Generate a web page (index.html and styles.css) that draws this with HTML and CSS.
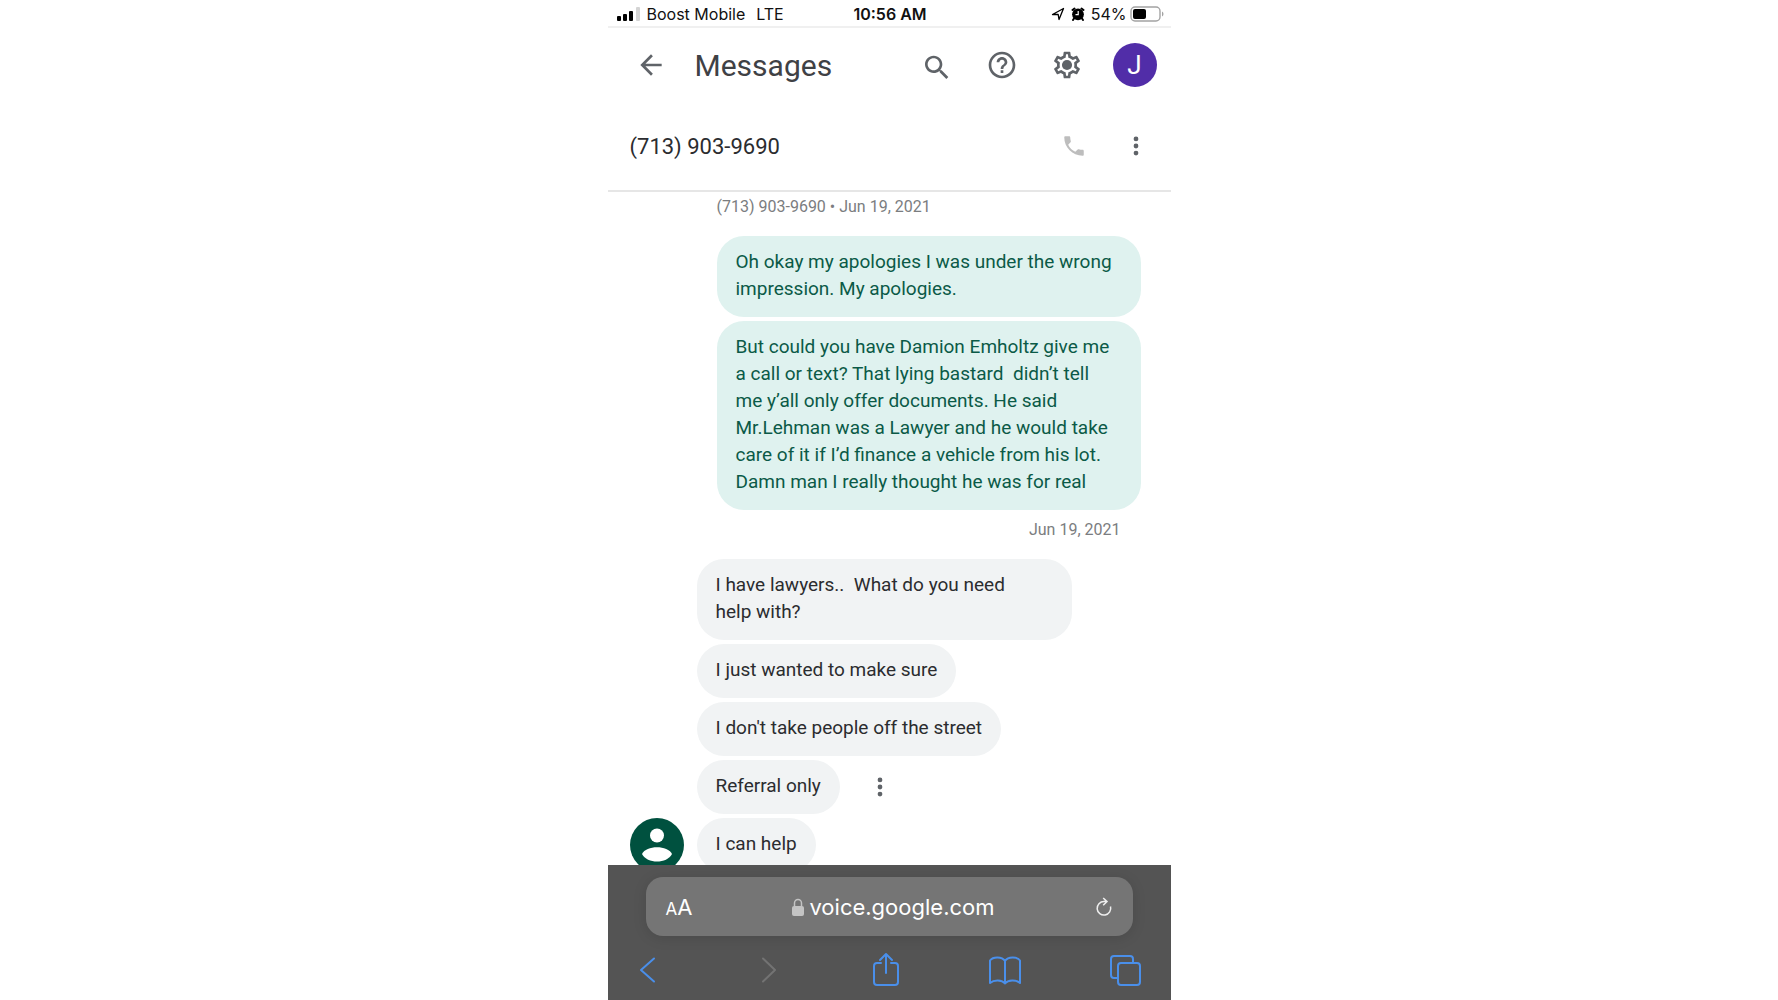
FILE: index.html
```html
<!DOCTYPE html>
<html lang="en">

<head>
    <meta charset="UTF-8">
    <meta name="viewport" content="width=device-width, initial-scale=1.0">
    <title>Messages</title>
    <link rel="stylesheet" href="styles.css">
</head>

<body>
    <div class="phone">
        <div class="status">
            <div class="status-left">
                <svg class="signal" viewBox="0 0 24 14" width="24" height="14" aria-hidden="true">
                    <rect x="0" y="9" width="4" height="5" rx="1"/>
                    <rect x="6" y="7" width="4" height="7" rx="1"/>
                    <rect x="12" y="4" width="4" height="10" rx="1"/>
                    <rect x="19" y="0" width="4" height="14" rx="1" fill="#d4d4d4"/>
                </svg>
                <span>Boost Mobile</span>
                <span class="network">LTE</span>
            </div>
            <div class="clock">10:56 AM</div>
            <div class="status-right">
                <svg viewBox="0 0 14 14" width="14" height="14" aria-hidden="true">
                    <path d="M1.500 7.500L12.500 1.500L8 12.500L7.200 7.500Z" fill="none" stroke="#000" stroke-width="1.300" stroke-linejoin="round"/>
                </svg>
                <svg viewBox="0 0 14 14" width="14" height="14" aria-hidden="true">
                    <circle cx="7" cy="7.300" r="5.900"/>
                    <path d="M1.500 3L3.500 1.500M12.500 3L10.500 1.500M3 11.500L2 13M11 11.500L12 13" stroke="#000" stroke-width="2" stroke-linecap="round"/>
                    <path d="M7.200 4v3.600H4.500" fill="none" stroke="#fff" stroke-width="1.200"/>
                </svg>
                <span>54%</span>
                <svg class="battery" viewBox="0 0 34 16" width="34" height="16" aria-hidden="true">
                    <rect x="1" y="1" width="29" height="14" rx="4" fill="none" stroke="#a3a3a3" stroke-width="1.400"/>
                    <rect x="3" y="3" width="13" height="10" rx="2"/>
                    <path d="M32 5.500v5c2-1 2-4 0-5z" fill="#a3a3a3"/>
                </svg>
            </div>
        </div>

        <header class="header">
            <button class="icon-btn" aria-label="Back">
                <svg viewBox="0 0 24 24" width="32" height="32"><path d="M20 11H7.830l5.590-5.590L12 4l-8 8 8 8 1.410-1.410L7.830 13H20v-2z"/></svg>
            </button>
            <h1>Messages</h1>
            <div class="header-actions">
                <button class="icon-btn" aria-label="Search">
                    <svg viewBox="0 0 24 24" width="32" height="32"><path d="M15.500 14h-.79l-.28-.27C15.410 12.590 16 11.110 16 9.500 16 5.910 13.090 3 9.500 3S3 5.910 3 9.500 5.910 16 9.500 16c1.610 0 3.090-.59 4.230-1.570l.27.28v.79l5 4.990L20.490 19l-4.990-5zm-6 0C7.010 14 5 11.990 5 9.500S7.010 5 9.500 5 14 7.010 14 9.500 11.990 14 9.500 14z" transform="translate(0 2)"/></svg>
                </button>
                <button class="icon-btn" aria-label="Help">
                    <svg viewBox="0 0 24 24" width="32" height="32"><path d="M11 18h2v-2h-2v2zm1-16C6.480 2 2 6.480 2 12s4.480 10 10 10 10-4.480 10-10S17.520 2 12 2zm0 18c-4.410 0-8-3.590-8-8s3.590-8 8-8 8 3.590 8 8-3.590 8-8 8zm0-14c-2.210 0-4 1.790-4 4h2c0-1.100.9-2 2-2s2 .9 2 2c0 2-3 1.750-3 5h2c0-2.250 3-2.500 3-5 0-2.210-1.790-4-4-4z"/></svg>
                </button>
                <button class="icon-btn" aria-label="Settings">
                    <svg viewBox="0 0 24 24" width="32" height="32"><path d="M19.430 12.980c.04-.32.07-.64.07-.98 0-.34-.03-.66-.07-.98l2.110-1.650c.19-.15.24-.42.12-.64l-2-3.460c-.09-.16-.26-.25-.44-.25-.06 0-.12.01-.17.03l-2.490 1c-.52-.4-1.080-.73-1.690-.98l-.38-2.650C14.460 2.180 14.250 2 14 2h-4c-.25 0-.46.18-.49.42l-.38 2.650c-.61.25-1.170.59-1.690.98l-2.490-1c-.06-.02-.12-.03-.18-.03-.17 0-.34.09-.43.25l-2 3.460c-.13.22-.07.49.12.64l2.110 1.650c-.04.32-.07.65-.07.98 0 .33.03.66.07.98l-2.110 1.650c-.19.15-.24.42-.12.64l2 3.460c.09.16.26.25.44.25.06 0 .12-.01.17-.03l2.490-1c.52.4 1.080.73 1.690.98l.38 2.650c.03.24.24.42.49.42h4c.25 0 .46-.18.49-.42l.38-2.650c.61-.25 1.170-.59 1.690-.98l2.490 1c.06.02.12.03.18.03.17 0 .34-.09.43-.25l2-3.460c.12-.22.07-.49-.12-.64l-2.110-1.650zm-1.980-1.710c.04.31.05.52.05.73 0 .21-.02.43-.05.73l-.14 1.130.89.7 1.080.84-.7 1.210-1.270-.51-1.040-.42-.9.68c-.43.32-.84.56-1.250.73l-1.060.43-.16 1.130-.2 1.350h-1.400l-.19-1.350-.16-1.130-1.060-.43c-.43-.18-.83-.41-1.230-.71l-.91-.7-1.060.43-1.270.51-.7-1.210 1.080-.84.89-.7-.14-1.130c-.03-.31-.05-.54-.05-.74s.02-.43.05-.73l.14-1.130-.89-.7-1.080-.84.7-1.210 1.270.51 1.040.42.9-.68c.43-.32.84-.56 1.250-.73l1.060-.43.16-1.130.2-1.350h1.390l.19 1.350.16 1.130 1.060.43c.43.18.83.41 1.230.71l.91.7 1.060-.43 1.270-.51.7 1.210-1.070.85-.89.7.14 1.130z"/><circle cx="12" cy="12" r="3.800"/></svg>
                </button>
                <button class="account" aria-label="Account">J</button>
            </div>
        </header>

        <div class="contact">
            <h2>(713) 903-9690</h2>
            <button class="icon-btn call" aria-label="Call" disabled>
                <svg viewBox="0 0 24 24" width="26" height="26"><path d="M6.620 10.790c1.440 2.830 3.760 5.140 6.590 6.590l2.200-2.200c.27-.27.67-.36 1.020-.24 1.120.37 2.330.57 3.570.57.55 0 1 .45 1 1V20c0 .55-.45 1-1 1-9.390 0-17-7.610-17-17 0-.55.45-1 1-1h3.500c.55 0 1 .45 1 1 0 1.250.2 2.450.57 3.570.11.35.03.74-.25 1.020l-2.200 2.200z"/></svg>
            </button>
            <button class="icon-btn" aria-label="More options">
                <svg viewBox="0 0 24 24" width="26" height="26"><circle cx="12" cy="5.500" r="2.200"/><circle cx="12" cy="12" r="2.200"/><circle cx="12" cy="18.500" r="2.200"/></svg>
            </button>
        </div>

        <main class="thread">
            <div class="sent">
                <div class="meta">(713) 903-9690 • Jun 19, 2021</div>
                <p class="bubble">Oh okay my apologies I was under the wrong impression. My apologies.</p>
                <p class="bubble">But could you have Damion Emholtz give me
a call or text? That lying bastard  didn’t tell
me y’all only offer documents. He said
Mr.Lehman was a Lawyer and he would take
care of it if I’d finance a vehicle from his lot.
Damn man I really thought he was for real</p>
                <div class="meta meta-end">Jun 19, 2021</div>
            </div>
            <div class="received">
                <svg class="avatar" viewBox="0 0 54 54" width="54" height="54" role="img" aria-label="Contact">
                    <circle cx="27" cy="27" r="27" fill="#00513f"/>
                    <circle cx="27" cy="17.500" r="7" fill="#fff"/>
                    <path d="M12 36C16 27 38 27 42 36C37 46 17 46 12 36Z" fill="#fff"/>
                </svg>
                <div class="bubbles">
                    <p class="bubble full">I have lawyers..  What do you need
help with?</p>
                    <p class="bubble">I just wanted to make sure</p>
                    <p class="bubble">I don't take people off the street</p>
                    <div class="bubble-row">
                        <p class="bubble">Referral only</p>
                        <button class="icon-btn" aria-label="Message options">
                            <svg viewBox="0 0 24 24" width="26" height="26"><circle cx="12" cy="5.500" r="2.200"/><circle cx="12" cy="12" r="2.200"/><circle cx="12" cy="18.500" r="2.200"/></svg>
                        </button>
                    </div>
                    <p class="bubble">I can help</p>
                </div>
            </div>
        </main>

        <footer class="browser">
            <div class="address">
                <button class="text-size" aria-label="Text size"><small>A</small>A</button>
                <button class="url">
                    <svg viewBox="0 0 12 18" width="12" height="18" aria-hidden="true">
                        <rect x="0" y="8" width="12" height="10" rx="2" fill="#c4c4c4"/>
                        <path d="M2.500 8V5a3.500 3.500 0 0 1 7 0v3" fill="none" stroke="#c4c4c4" stroke-width="1.500"/>
                    </svg>
                    <span>voice.google.com</span>
                </button>
                <button class="reload" aria-label="Reload">
                    <svg viewBox="0 0 18 20" width="18" height="20"><path d="M15.500 9.500A6.800 6.800 0 1 1 9 4.500h2.500M8.200 1L12 4.600L8.200 8.300"/></svg>
                </button>
            </div>
            <nav class="toolbar">
                <button aria-label="Back">
                    <svg viewBox="0 0 32 36" width="32" height="36"><path d="M22 6.500L9 18L22 29.500"/></svg>
                </button>
                <button aria-label="Forward" disabled>
                    <svg viewBox="0 0 32 36" width="32" height="36"><path d="M12 6.500L24 18L12 29.500"/></svg>
                </button>
                <button aria-label="Share">
                    <svg viewBox="0 0 32 36" width="32" height="36"><path d="M11 11H7a3 3 0 0 0-3 3v16a3 3 0 0 0 3 3h18a3 3 0 0 0 3-3V14a3 3 0 0 0-3-3h-4M16 21V2M10 8L16 2L22 8"/></svg>
                </button>
                <button aria-label="Bookmarks">
                    <svg viewBox="0 0 32 36" width="32" height="36"><path d="M16 9C13 4.500 4 4.500 1 8.500V31C5 27.500 13 27.500 16 31.500C19 27.500 27 27.500 31 31V8.500C28 4.500 19 4.500 16 9ZM16 9V31.500"/></svg>
                </button>
                <button aria-label="Tabs">
                    <svg viewBox="0 0 32 36" width="32" height="36"><rect x="9" y="11" width="22" height="22" rx="3"/><path d="M9 26H5a3 3 0 0 1-3-3V7a3 3 0 0 1 3-3h16a3 3 0 0 1 3 3v4"/></svg>
                </button>
            </nav>
        </footer>
    </div>
</body>

</html>
```
FILE: styles.css
```css
* {
    box-sizing: border-box;
}
body {
    margin: 0;
    background: #fff;
    font-family: Roboto, "Liberation Sans", sans-serif;
    color: #2b2c2f;
}
h1, h2, p {
    margin: 0;
    font-weight: 400;
}
button {
    padding: 0;
    border: none;
    background: none;
    font: inherit;
    color: inherit;
}
svg {
    display: block;
}
.phone {
    display: flex;
    flex-direction: column;
    max-width: 563px;
    height: 100vh;
    margin: 0 auto;
}

/* status bar */
.status {
    display: grid;
    grid-template-columns: 1fr auto 1fr;
    align-items: center;
    height: 28px;
    padding: 2px 7px 0 9px;
    border-bottom: 2px solid #f0f0f0;
    font: 16px Inter, "Liberation Sans", sans-serif;
    color: #111;
}
.status-left,
.status-right {
    display: flex;
    align-items: center;
    gap: 6px;
}
.network {
    margin-left: 5px;
}
.status-right {
    justify-content: flex-end;
}
.battery {
    margin-left: -3px;
}
.clock {
    font-weight: 600;
}

/* app header */
.header {
    display: flex;
    align-items: center;
    gap: 28px;
    height: 74px;
    padding: 0 14px 0 27px;
}
.icon-btn {
    fill: #5f6368;
}
.header h1 {
    font-size: 30px;
    color: #3f4145;
}
.header-actions {
    display: flex;
    align-items: center;
    gap: 33px;
    margin-left: auto;
}
.account {
    width: 44px;
    height: 44px;
    margin-left: -3px;
    border-radius: 50%;
    background: #512da8;
    color: #fff;
    font-size: 26px;
}
.contact {
    display: flex;
    align-items: center;
    gap: 36px;
    height: 90px;
    padding: 0 22px;
    border-bottom: 2px solid #e6e6e6;
}
.contact h2 {
    margin-right: auto;
    font-size: 22px;
}
.call {
    fill: #bdbdbd;
}

/* conversation */
.thread {
    flex: 1;
    min-height: 0;
    overflow: hidden;
    padding: 3px 30px 0 22px;
}
.sent {
    width: 424px;
    max-width: 100%;
    margin-left: auto;
}
.meta {
    line-height: 24px;
    margin-bottom: 17px;
    font-size: 16px;
    color: #7b7d80;
}
.meta-end {
    margin: 8px 20px 17px;
    text-align: right;
}
.bubble {
    width: fit-content;
    padding: 12px 19px 15px;
    border-radius: 27px;
    background: #f1f3f4;
    font-size: 19px;
    line-height: 27px;
    white-space: pre-wrap;
}
.bubble + .bubble {
    margin-top: 4px;
}
.sent .bubble {
    width: auto;
    background: #dff2ef;
    color: #0b5a47;
}
.received {
    display: flex;
    align-items: flex-end;
    gap: 13px;
}
.avatar {
    flex: none;
}
.bubbles {
    display: flex;
    flex-direction: column;
    gap: 4px;
    width: 375px;
}
.received .bubble {
    margin: 0;
}
.received .full {
    width: 100%;
}
.bubble-row {
    display: flex;
    align-items: center;
    gap: 27px;
}

/* browser controls */
.browser {
    padding: 12px 38px 0;
    background: #545454;
}
.address {
    display: flex;
    align-items: center;
    justify-content: space-between;
    height: 59px;
    padding: 0 20px;
    border-radius: 17px;
    background: #757575;
    box-shadow: 0 2px 14px rgba(0, 0, 0, .12);
    font-family: Inter, "Liberation Sans", sans-serif;
    font-size: 22px;
    color: #fff;
}
.text-size small {
    font-size: 17px;
}
.url {
    display: flex;
    align-items: center;
    gap: 5px;
}
.reload svg {
    fill: none;
    stroke: #eee;
    stroke-width: 1.5;
}
.toolbar {
    display: flex;
    justify-content: space-between;
    height: 64px;
    margin: 0 -8px 0 -14px;
    padding-top: 4px;
}
.toolbar svg {
    fill: none;
    stroke: #4a8fea;
    stroke-width: 2;
    stroke-linecap: round;
    stroke-linejoin: round;
}
.toolbar button:disabled svg {
    stroke: #737373;
}
```
